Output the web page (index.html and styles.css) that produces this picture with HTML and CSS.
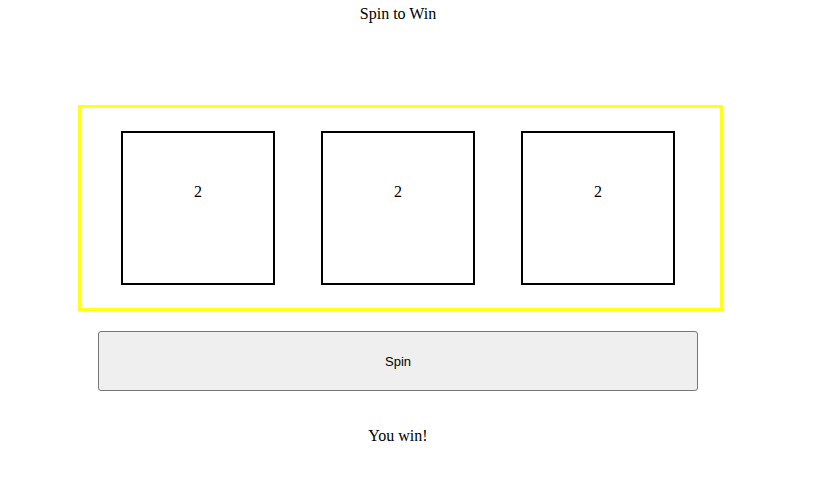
FILE: index.html
```html
<!DOCTYPE html>
<html>
<head>
<meta charset="utf-8">
<link rel="stylesheet" href="styles.css">
</head>
<body>
<div class="page">
  <div class="title">Spin to Win</div>
  <div class="machine">
    <div class="reel">2</div>
    <div class="reel">2</div>
    <div class="reel">2</div>
  </div>
  <button class="spin">Spin</button>
  <div class="result">You win!</div>
</div>
</body>
</html>
```
FILE: styles.css
```css
html, body {
  margin: 0;
  padding: 0;
  background: #ffffff;
}
.page {
  width: 796px;
  font-family: "Liberation Serif", "Times New Roman", serif;
  font-size: 16px;
  color: #000;
}
.title {
  padding-top: 5px;
  line-height: 18px;
  text-align: center;
}
.machine {
  box-sizing: border-box;
  margin-top: 82px;
  margin-left: 78px;
  width: 645px;
  height: 206px;
  border: 3px solid #ffff1a;
  padding: 23px 0 0 40px;
  display: flex;
  gap: 46px;
  align-items: flex-start;
}
.reel {
  box-sizing: border-box;
  width: 154px;
  height: 154px;
  border: 2px solid #000;
  padding-top: 50px;
  line-height: 18px;
  text-align: center;
}
.spin {
  display: block;
  box-sizing: border-box;
  margin: 20px 0 0 98px;
  width: 600px;
  height: 60px;
  background: #efefef;
  border: 1px solid #767676;
  border-radius: 3px;
  font-family: "Liberation Sans", Arial, sans-serif;
  font-size: 13px;
  color: #000;
  padding: 0;
}
.result {
  margin-top: 36px;
  line-height: 18px;
  text-align: center;
}
```
